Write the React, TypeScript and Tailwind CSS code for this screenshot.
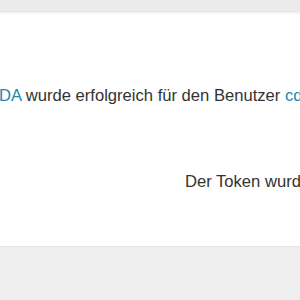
export default function App() {
  return (
    <div
      className="w-[300px] h-[300px] overflow-hidden flex flex-col bg-white text-[#333]"
      style={{ fontFamily: '"Liberation Sans", Arial, sans-serif' }}
    >
      {/* top bar */}
      <div className="h-[11px] shrink-0 bg-[#ebebeb]" />
      <div className="h-[3px] shrink-0 bg-[#f4f4f4] border-t border-[#e4e4e4]" />

      {/* content */}
      <div className="flex-1 flex flex-col pt-[72px]">
        <p className="whitespace-nowrap text-[16.6px] leading-[20px] -ml-px">
          <span className="text-[#2388ad]">DA</span> wurde erfolgreich für den Benutzer{' '}
          <span className="text-[#2388ad]">cd</span>
        </p>
        <p className="whitespace-nowrap text-[16.6px] leading-[20px] mt-[66px] pl-[185px]">
          Der Token wurde
        </p>
      </div>

      {/* footer */}
      <div className="h-[54px] shrink-0 bg-[#efefef] border-t border-[#e5e5e5]" />
    </div>
  );
}
